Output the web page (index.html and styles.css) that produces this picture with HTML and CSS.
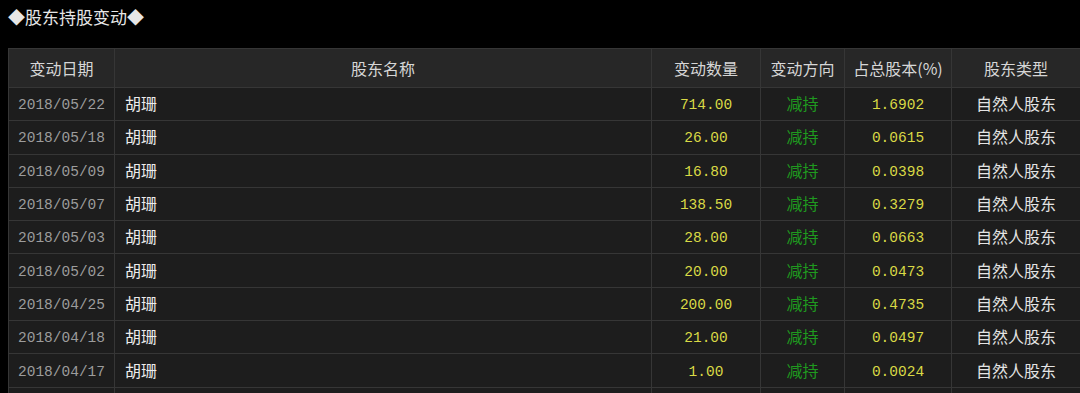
FILE: index.html
```html
<!DOCTYPE html>
<html lang="zh-CN">
<head>
    <meta charset="UTF-8">
    <title>股东持股变动</title>
    <link rel="stylesheet" href="styles.css">
</head>
<body>
    <div class="title">◆股东持股变动◆</div>
    <table class="holders">
        <colgroup>
            <col class="c-date">
            <col class="c-name">
            <col class="c-qty">
            <col class="c-dir">
            <col class="c-pct">
            <col class="c-type">
        </colgroup>
        <tr class="head">
            <th>变动日期</th>
            <th>股东名称</th>
            <th>变动数量</th>
            <th>变动方向</th>
            <th>占总股本(%)</th>
            <th>股东类型</th>
        </tr>
        <tr><td class="date">2018/05/22</td><td class="name">胡珊</td><td class="num">714.00</td><td class="dir">减持</td><td class="num">1.6902</td><td class="type">自然人股东</td></tr>
        <tr><td class="date">2018/05/18</td><td class="name">胡珊</td><td class="num">26.00</td><td class="dir">减持</td><td class="num">0.0615</td><td class="type">自然人股东</td></tr>
        <tr><td class="date">2018/05/09</td><td class="name">胡珊</td><td class="num">16.80</td><td class="dir">减持</td><td class="num">0.0398</td><td class="type">自然人股东</td></tr>
        <tr><td class="date">2018/05/07</td><td class="name">胡珊</td><td class="num">138.50</td><td class="dir">减持</td><td class="num">0.3279</td><td class="type">自然人股东</td></tr>
        <tr><td class="date">2018/05/03</td><td class="name">胡珊</td><td class="num">28.00</td><td class="dir">减持</td><td class="num">0.0663</td><td class="type">自然人股东</td></tr>
        <tr><td class="date">2018/05/02</td><td class="name">胡珊</td><td class="num">20.00</td><td class="dir">减持</td><td class="num">0.0473</td><td class="type">自然人股东</td></tr>
        <tr><td class="date">2018/04/25</td><td class="name">胡珊</td><td class="num">200.00</td><td class="dir">减持</td><td class="num">0.4735</td><td class="type">自然人股东</td></tr>
        <tr><td class="date">2018/04/18</td><td class="name">胡珊</td><td class="num">21.00</td><td class="dir">减持</td><td class="num">0.0497</td><td class="type">自然人股东</td></tr>
        <tr><td class="date">2018/04/17</td><td class="name">胡珊</td><td class="num">1.00</td><td class="dir">减持</td><td class="num">0.0024</td><td class="type">自然人股东</td></tr>
        <tr class="more"><td></td><td></td><td></td><td></td><td></td><td></td></tr>
    </table>
</body>
</html>
```

FILE: styles.css
```css
body {
    margin: 0;
    background-color: #000;
    color: #e0e0e0;
    font-family: "Noto Sans CJK SC", sans-serif;
    overflow: hidden;
}
.title {
    padding: 5px 0 0 8px;
    height: 48px;
    box-sizing: border-box;
    font-size: 17px;
    line-height: 24px;
    color: #e6e6e6;
}
.holders {
    margin-left: 8px;
    width: 1072px;
    table-layout: fixed;
    border-collapse: collapse;
    background-color: #1d1d1d;
}
.c-date { width: 106px; }
.c-name { width: 537px; }
.c-qty { width: 109px; }
.c-dir { width: 84px; }
.c-pct { width: 107px; }
.c-type { width: 129px; }
th, td {
    border: 1px solid #363636;
    padding: 0;
    text-align: center;
    white-space: nowrap;
    overflow: hidden;
}
th {
    height: 38px;
    background-color: #272727;
    color: #d6d6d6;
    font-size: 16px;
    font-weight: normal;
}
td {
    height: 30.3px;
    font-size: 16px;
    line-height: 18px;
}
td.name, td.dir, td.type {
    padding-bottom: 2px;
}
td.date, td.num {
    padding-top: 2px;
}
.date {
    font-family: "Liberation Mono", monospace;
    font-size: 14.5px;
    color: #9c9c9c;
}
td.name {
    text-align: left;
    padding-left: 10px;
    color: #ececec;
}
.num {
    font-family: "Liberation Mono", monospace;
    font-size: 14.5px;
    color: #d9d945;
}
.dir {
    color: #1f9a1f;
}
.type {
    color: #e4e4e4;
}
```
